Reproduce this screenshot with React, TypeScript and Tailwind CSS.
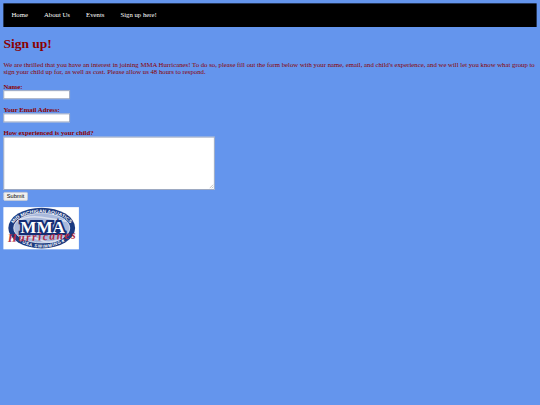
const links = ["Home", "About Us", "Events", "Sign up here!"];

function NavBar() {
  return (
    <nav className="flex h-14 bg-black text-white">
      {links.map((link) => (
        <a key={link} href="#" className="p-[19px]">
          {link}
        </a>
      ))}
    </nav>
  );
}

function TextField({ id, label }: { id: string; label: string }) {
  return (
    <div className="mb-4 flex flex-col items-start">
      <label htmlFor={id} className="font-bold">
        {label}
      </label>
      <input id={id} type="text" className="h-[21px] w-[158px] border-2 border-[#8f9cb8] bg-white px-px" />
    </div>
  );
}

function Logo() {
  return (
    <svg viewBox="0 0 76 42" className="block h-[100px] w-[179px] bg-white" preserveAspectRatio="none" role="img" aria-label="MMA Hurricanes">
      <defs>
        <path id="top-arc" d="M8.5 21.5 A30 16 0 0 1 68.5 21.5" />
        <path id="bottom-arc" d="M12 30 A30 19.5 0 0 0 65 30" />
      </defs>
      <ellipse cx="38.6" cy="20.8" rx="33.6" ry="20.3" fill="#1b3a80" />
      <ellipse cx="38.6" cy="20.8" rx="28.2" ry="14.8" fill="#a9b9dc" stroke="#fff" strokeWidth="0.7" />
      <path d="M14 14Q24 8 38 10T63 14M17 31Q28 28 38 33T60 30" fill="none" stroke="#d9dfee" strokeWidth="1.6" />
      <g fontFamily="'Liberation Sans', sans-serif" fontWeight="700" fill="#fff">
        <text fontSize="4.6">
          <textPath href="#top-arc" startOffset="50%" textAnchor="middle" textLength="63" lengthAdjust="spacingAndGlyphs">
            MID MICHIGAN AQUATICS
          </textPath>
        </text>
        <text fontSize="4.4">
          <textPath href="#bottom-arc" startOffset="50%" textAnchor="middle" textLength="50">
            ★USA SWIMMING★
          </textPath>
        </text>
      </g>
      <text
        x="17"
        y="25.3"
        textLength="45"
        lengthAdjust="spacingAndGlyphs"
        fontFamily="'Liberation Serif', serif"
        fontWeight="700"
        fontSize="17"
        fill="#fff"
        stroke="#142d73"
        strokeWidth="3.8"
        strokeLinejoin="miter"
        paintOrder="stroke"
      >
        MMA
      </text>
      <text
        x="4.5"
        y="33"
        textLength="68"
        lengthAdjust="spacing"
        fontFamily="'Liberation Serif', serif"
        fontStyle="italic"
        fontWeight="700"
        fontSize="11.5"
        fill="#b02840"
        transform="rotate(-3 38 29)"
      >
        Hurricanes
      </text>
    </svg>
  );
}

export default function App() {
  return (
    <div className="h-screen overflow-hidden bg-[#6495ed]">
      <div className="w-[1280px] origin-top-left scale-[0.421875] p-2 font-['Liberation_Serif',serif] text-base leading-[18px] text-[#8b0000]">
        <NavBar />
        <h1 className="mt-[21px] text-[32px] leading-[37px] font-bold">Sign up!</h1>
        <p className="mt-[22px]">
          We are thrilled that you have an interest in joining MMA Hurricanes! To do so, please fill out the form below
          with your name, email, and child's experience, and we will let you know what group to sign your child up for,
          as well as cost. Please allow us 48 hours to respond.
        </p>
        <form className="mt-4">
          <TextField id="name" label="Name:" />
          <TextField id="email" label="Your Email Adress:" />
          <label htmlFor="experience" className="block font-bold">
            How experienced is your child?
          </label>
          <div className="relative h-[126px] w-[501px]">
            <textarea id="experience" className="block h-full w-full resize-none border-2 border-[#8f9cb8] bg-white" />
            <svg viewBox="0 0 10 10" className="absolute right-[3px] bottom-[3px] size-2.5" fill="none" stroke="#777">
              <path d="M0 10 10 0M5 10 10 5" />
            </svg>
          </div>
          <button
            type="button"
            className="mt-[5px] block h-[21px] w-[58px] rounded-[3px] border-2 border-[#c8ccd4] bg-[#efefef] text-center font-['Liberation_Sans',sans-serif] text-[13.33px] leading-[17px] text-black"
          >
            Submit
          </button>
        </form>
        <div className="mt-[15px]">
          <Logo />
        </div>
      </div>
    </div>
  );
}
